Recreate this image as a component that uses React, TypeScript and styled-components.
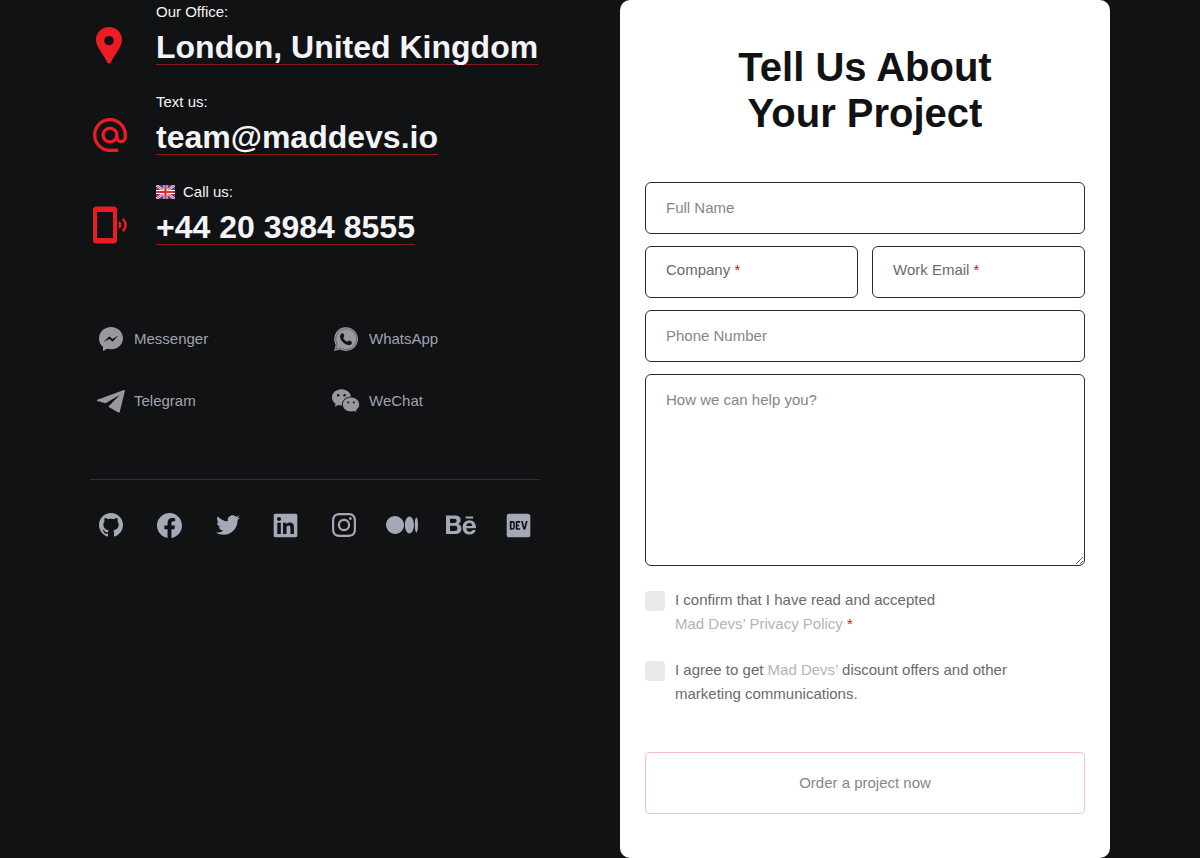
import React from 'react';
import styled, { createGlobalStyle } from 'styled-components';
import { FaTwitter, FaBehance, FaLinkedin, FaDev } from 'react-icons/fa';
import { BsGithub, BsFacebook, BsMedium } from 'react-icons/bs';
import { SiInstagram } from 'react-icons/si';

const GlobalStyle = createGlobalStyle`
  *, *::before, *::after { box-sizing: border-box; }
  body {
    margin: 0;
    background: #111213;
    color: #f4f4f8;
    font-family: "Liberation Sans", Arial, sans-serif;
    font-size: 15px;
    line-height: 24px;
  }
  a { color: inherit; text-decoration: none; }
`;

const Page = styled.main`
  display: flex;
  justify-content: space-between;
  max-width: 1020px;
  margin: 0 auto;
`;

const Contacts = styled.section`
  flex: 0 1 450px;
`;

const ContactRow = styled.div`
  display: grid;
  grid-template-columns: 38px 1fr;
  column-gap: 28px;
  height: 90px;
`;

const ContactIcon = styled.div`
  display: flex;
  justify-content: center;
  align-items: center;
  height: 90px;
  color: #ec1c24;

  svg { flex: none; }
`;

const ContactLabel = styled.p`
  display: flex;
  align-items: center;
  gap: 8px;
  margin: 0;
`;

const ContactLink = styled.a`
  display: inline-block;
  height: 41px;
  border-bottom: 1px solid #8d181c;
  font-size: 32px;
  font-weight: 700;
  line-height: 47px;
  white-space: nowrap;
`;

const Messengers = styled.div`
  display: grid;
  grid-template-columns: 235px 1fr;
  row-gap: 30px;
  padding: 53px 0 62px;
  border-bottom: 1px solid #303134;
`;

const MessengerLink = styled.a`
  display: flex;
  align-items: center;
  gap: 8px;
  height: 32px;
  padding-left: 6px;
  color: #a0a2b0;

  svg { color: #98989e; }
`;

const IconSlot = styled.span`
  display: flex;
  justify-content: center;
  align-items: center;
  width: 30px;
  height: 30px;
`;

const Socials = styled.nav`
  display: flex;
  justify-content: space-between;
  padding: 29px 4px;
  color: #a5a8b7;
`;

const SocialLink = styled.a`
  display: flex;
  justify-content: center;
  align-items: center;
  width: 34px;
  height: 32px;
`;

const Card = styled.form`
  flex: 0 1 490px;
  padding: 44px 25px;
  border-radius: 10px;
  background: #fff;
  color: #6a6a6b;
`;

const Title = styled.h2`
  margin: 0 0 46px;
  color: #111213;
  font-size: 40px;
  line-height: 46px;
  text-align: center;
`;

const Fields = styled.div`
  display: grid;
  grid-template-columns: 1fr 1fr;
  gap: 12px 14px;
`;

const Field = styled.div<{ $wide?: boolean }>`
  display: grid;
  grid-column: ${(p) => (p.$wide ? '1 / -1' : 'auto')};
`;

const controlStyle = `
  grid-area: 1 / 1;
  width: 100%;
  min-width: 0;
  margin: 0;
  border: 1px solid #2b2b2d;
  border-radius: 6px;
  background: transparent;
  color: #111213;
  font: inherit;
  &::placeholder { color: #868687; opacity: 1; }
`;

const Input = styled.input`
  ${controlStyle}
  height: 52px;
  padding: 0 20px 2px;
`;

const TextArea = styled.textarea`
  ${controlStyle}
  display: block;
  height: 192px;
  padding: 13px 20px;
  resize: vertical;
`;

const FieldLabel = styled.label`
  grid-area: 1 / 1;
  align-self: start;
  padding: 12px 21px;
`;

const Star = styled.span`
  color: #ff0000;
`;

const Consents = styled.div`
  display: grid;
  gap: 22px;
  padding: 22px 0 46px;
`;

const Consent = styled.div`
  display: flex;
  align-items: flex-start;
  gap: 10px;
`;

const Checkbox = styled.input`
  appearance: none;
  flex: none;
  width: 20px;
  height: 20px;
  margin: 3px 0 0;
  border-radius: 4px;
  background: #e9e9e9;

  &:checked { background: #ec1c24; }
`;

const PolicyLink = styled.a`
  color: #b4b4b7;
`;

const Submit = styled.button`
  width: 100%;
  height: 62px;
  border: 1px solid #fabfc1;
  border-radius: 4px;
  background: #fff;
  color: #868687;
  font: inherit;
`;

const PinIcon = () => (
  <svg width="26" height="37" viewBox="0 0 26 38" preserveAspectRatio="none" fill="currentColor" aria-hidden="true">
    <path fillRule="evenodd" d="M13 0C5.8 0 0 5.8 0 13c0 4 2 7.700 4.200 11.400 2.800 4.600 5.300 8 6.800 11.800.8 1.700 3.200 1.700 4 0 1.500-3.800 4-7.200 6.800-11.800C24 20.700 26 17 26 13 26 5.800 20.200 0 13 0Zm0 9.200a4.800 4.800 0 1 1 0 9.600 4.800 4.800 0 0 1 0-9.600Z" />
  </svg>
);

const AtIcon = () => (
  <svg width="36" height="34" viewBox="-2 0 36 34" fill="none" stroke="currentColor" strokeWidth="3.300" aria-hidden="true">
    <circle cx="17" cy="17" r="6.900" />
    <path d="M25.300 32.300H17A15.300 15.300 0 1 1 32.300 17v2.300a4.200 4.200 0 0 1-8.400 0V17" />
  </svg>
);

const PhoneIcon = () => (
  <svg width="36" height="38" viewBox="-2 0 36 38" aria-hidden="true">
    <path fill="currentColor" fillRule="evenodd" d="M3.500 .5h17A3.500 3.500 0 0 1 24 4v30a3.500 3.500 0 0 1-3.500 3.500h-17A3.500 3.500 0 0 1 0 34V4A3.500 3.500 0 0 1 3.500.5ZM4 6v26h16V6H4Z" />
    <path fill="none" stroke="currentColor" strokeWidth="2.400" d="M26 16q2.400 3 0 6M29.800 12.700q5.600 6.300 0 12.600" />
  </svg>
);

const FlagIcon = () => (
  <svg width="19" height="14" viewBox="0 0 19 14" aria-hidden="true">
    <path fill="#41479b" d="M0 0h19v14H0z" />
    <path stroke="#f5f5f5" strokeWidth="2.600" d="M0 0l19 14M19 0L0 14" />
    <path stroke="#ff4b55" strokeWidth="1.100" d="M0 0l19 14M19 0L0 14" />
    <path stroke="#f5f5f5" strokeWidth="4" d="M9.500 0v14M0 7h19" />
    <path stroke="#dc2f35" strokeWidth="2.200" d="M9.500 0v14M0 7h19" />
  </svg>
);

const MessengerIcon = () => (
  <svg width="24" height="24" viewBox="0 0 24 24" fill="currentColor" aria-hidden="true">
    <path fillRule="evenodd" d="M12 0C5.200 0 0 5 0 11.500c0 3.400 1.500 6.400 4 8.500V24l4.200-2.200c1.200.3 2.500.5 3.800.5 6.800 0 12-4.800 12-11C24 5 18.800 0 12 0ZM4.600 15l5.700-5.800 3.100 2.800 5.800-3.200-5.600 5.900-3.200-2.600Z" />
  </svg>
);

const WhatsAppIcon = () => (
  <svg width="24" height="24" viewBox="0 0 24 24" aria-hidden="true">
    <path fill="currentColor" d="M0 24l1.700-6.100A11.900 11.900 0 1 1 6.200 22.400Z" />
    <path fill="none" stroke="#111213" strokeOpacity=".6" strokeWidth=".6" d="M1.900 22.100l1.300-4.700A10.400 10.400 0 1 1 6.500 20.900Z" />
    <path fill="#111213" d="M9.300 6.500c.5 1 .9 2 1 2.500.1.500-1.200 1.400-1 1.900.7 1.700 2 3 3.900 3.800.5.200 1.400-1.300 1.900-1.200.6.200 1.800.8 2.700 1.400.5.400-.1 3-2.800 3.100-4.700-.3-9-4.600-9-8.800.1-2.600 2.700-3.500 3.300-2.700Z" />
  </svg>
);

const TelegramIcon = () => (
  <svg width="28" height="23" viewBox="0 0 28 23" fill="currentColor" aria-hidden="true">
    <path d="M.3 9.700 27 .1c.6-.2 1 .2.900.8L22.700 22c-.2.7-.8 1-1.400.6l-10-5.900L22.700 4.900 8.500 13.200.4 10.900c-.7-.2-.7-1-.1-1.200Z" />
  </svg>
);

const WeChatIcon = () => (
  <svg width="28" height="24" viewBox="0 0 28 24" aria-hidden="true">
    <path fill="currentColor" d="M9.500.3C4.200.3 0 3.900 0 8.400c0 2.600 1.400 4.800 3.500 6.300l-.6 3 3.300-1.800c1.100.3 2.200.5 3.300.5 5.300 0 9.500-3.500 9.500-8S14.800.3 9.500.3Z" />
    <path fill="currentColor" stroke="#111213" strokeWidth="1" d="M19 8c-4.800 0-8.600 3.300-8.600 7.500s3.800 7.400 8.600 7.400c1.100 0 2.100-.2 3-.5l3.200 1.600-.7-2.900c1.900-1.300 3.100-3.300 3.100-5.600C27.600 11.300 23.800 8 19 8Z" />
    <g fill="#111213">
      <circle cx="6.200" cy="6.300" r="1.200" />
      <circle cx="12.600" cy="6.300" r="1.200" />
      <circle cx="16.200" cy="13.500" r="1" />
      <circle cx="21.800" cy="13.500" r="1" />
    </g>
  </svg>
);

const contacts = [
  { label: 'Our Office:', text: 'London, United Kingdom', href: '#office', icon: <PinIcon /> },
  { label: 'Text us:', text: 'team@maddevs.io', href: 'mailto:team@maddevs.io', icon: <AtIcon /> },
  { label: 'Call us:', text: '+44 20 3984 8555', href: 'tel:+442039848555', icon: <PhoneIcon />, flag: true },
];

const messengers = [
  { name: 'Messenger', icon: <MessengerIcon /> },
  { name: 'WhatsApp', icon: <WhatsAppIcon /> },
  { name: 'Telegram', icon: <TelegramIcon /> },
  { name: 'WeChat', icon: <WeChatIcon /> },
];

const socials = [
  { name: 'GitHub', icon: <BsGithub size={24} /> },
  { name: 'Facebook', icon: <BsFacebook size={25} /> },
  { name: 'Twitter', icon: <FaTwitter size={24} /> },
  { name: 'LinkedIn', icon: <FaLinkedin size={27} /> },
  { name: 'Instagram', icon: <SiInstagram size={24} /> },
  { name: 'Medium', icon: <BsMedium size={32} /> },
  { name: 'Behance', icon: <FaBehance size={30} /> },
  { name: 'DEV', icon: <FaDev size={27} /> },
];

export default function App() {
  return (
    <>
      <GlobalStyle />
      <Page>
        <Contacts>
          {contacts.map((c) => (
            <ContactRow key={c.label}>
              <ContactIcon>{c.icon}</ContactIcon>
              <div>
                <ContactLabel>
                  {c.flag && <FlagIcon />}
                  {c.label}
                </ContactLabel>
                <ContactLink href={c.href}>{c.text}</ContactLink>
              </div>
            </ContactRow>
          ))}
          <Messengers>
            {messengers.map((m) => (
              <MessengerLink key={m.name} href="#">
                <IconSlot>{m.icon}</IconSlot>
                {m.name}
              </MessengerLink>
            ))}
          </Messengers>
          <Socials>
            {socials.map((s) => (
              <SocialLink key={s.name} href="#" aria-label={s.name}>
                {s.icon}
              </SocialLink>
            ))}
          </Socials>
        </Contacts>
        <Card>
          <Title>
            Tell Us About
            <br />
            Your Project
          </Title>
          <Fields>
            <Field $wide>
              <Input aria-label="Full Name" placeholder="Full Name" />
            </Field>
            <Field>
              <FieldLabel htmlFor="company">
                Company <Star>*</Star>
              </FieldLabel>
              <Input id="company" />
            </Field>
            <Field>
              <FieldLabel htmlFor="email">
                Work Email <Star>*</Star>
              </FieldLabel>
              <Input id="email" type="email" />
            </Field>
            <Field $wide>
              <Input type="tel" aria-label="Phone Number" placeholder="Phone Number" />
            </Field>
            <Field $wide>
              <TextArea aria-label="How we can help you?" placeholder="How we can help you?" />
            </Field>
          </Fields>
          <Consents>
            <Consent>
              <Checkbox type="checkbox" id="privacy" />
              <label htmlFor="privacy">
                I confirm that I have read and accepted
                <br />
                <PolicyLink href="#privacy-policy">Mad Devs’ Privacy Policy</PolicyLink> <Star>*</Star>
              </label>
            </Consent>
            <Consent>
              <Checkbox type="checkbox" id="offers" />
              <label htmlFor="offers">
                I agree to get <PolicyLink href="#mad-devs">Mad Devs’</PolicyLink> discount offers and other
                <br />
                marketing communications.
              </label>
            </Consent>
          </Consents>
          <Submit type="button">Order a project now</Submit>
        </Card>
      </Page>
    </>
  );
}
